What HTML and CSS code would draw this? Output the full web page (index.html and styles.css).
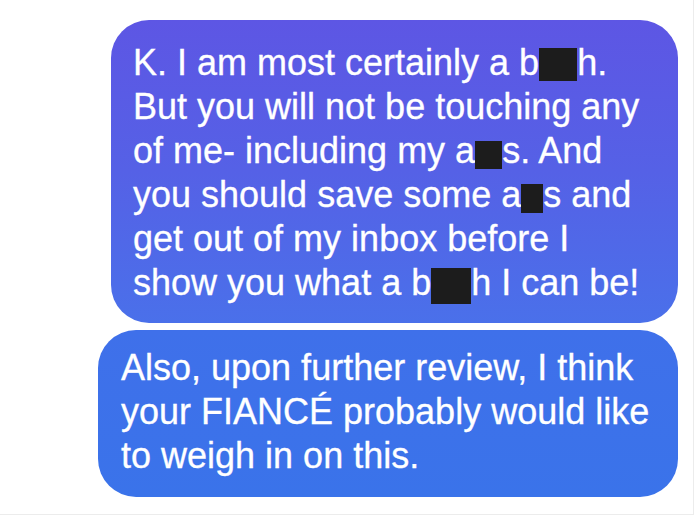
FILE: index.html
```html
<!DOCTYPE html>
<html lang="en">
<head>
<meta charset="utf-8">
<title>Messages</title>
<link rel="stylesheet" href="styles.css">
</head>
<body>
<div class="frame">
  <div class="thread">
    <div class="bubble bubble-first">
      <p class="msg">
        <span class="line">K. I am most certainly a b<span class="censor c-wide1"></span>h.</span>
        <span class="line">But you will not be touching any</span>
        <span class="line">of me- including my a<span class="censor c-narrow1"></span>s. And</span>
        <span class="line">you should save some a<span class="censor c-narrow2"></span>s and</span>
        <span class="line">get out of my inbox before I</span>
        <span class="line">show you what a b<span class="censor c-wide2"></span>h I can be!</span>
      </p>
    </div>
    <div class="bubble bubble-second">
      <p class="msg">
        <span class="line">Also, upon further review, I think</span>
        <span class="line">your FIANCÉ probably would like</span>
        <span class="line">to weigh in on this.</span>
      </p>
    </div>
  </div>
</div>
</body>
</html>
```

FILE: styles.css
```css
html, body {
  margin: 0;
  padding: 0;
  background: #ffffff;
}

.frame {
  width: 694px;
  height: 515px;
  border-right: 1px solid #ececec;
  border-bottom: 1px solid #ececec;
  box-sizing: border-box;
  overflow: hidden;
}

.thread {
  display: flex;
  flex-direction: column;
  align-items: flex-end;
  gap: 7px;
  padding: 20px 15px 0 0;
}

.bubble {
  border-radius: 38px;
  color: #ffffff;
  box-sizing: border-box;
}

.bubble-first {
  width: 567px;
  height: 303px;
  padding: 21px 18px 0 22px;
  background: linear-gradient(180deg, #5d56e4 0%, #5561e6 50%, #4a70ea 100%);
}

.bubble-second {
  width: 580px;
  height: 167px;
  padding: 16px 18px 0 23px;
  background: linear-gradient(180deg, #3f70ea 0%, #3a73ea 100%);
}

.msg {
  margin: 0;
  font-family: "Liberation Sans", Arial, sans-serif;
  font-size: 36px;
  line-height: 44px;
  -webkit-text-stroke: 0.3px #ffffff;
}

.line {
  display: block;
  white-space: nowrap;
}

.censor {
  display: inline-block;
  background: #1c1c1c;
  vertical-align: -6px;
}

.c-wide1 {
  width: 38px;
  height: 33px;
}

.c-narrow1 {
  width: 27px;
  height: 28px;
}

.c-narrow2 {
  width: 22px;
  height: 29px;
}

.c-wide2 {
  width: 40px;
  height: 36px;
  vertical-align: -9px;
}
```
